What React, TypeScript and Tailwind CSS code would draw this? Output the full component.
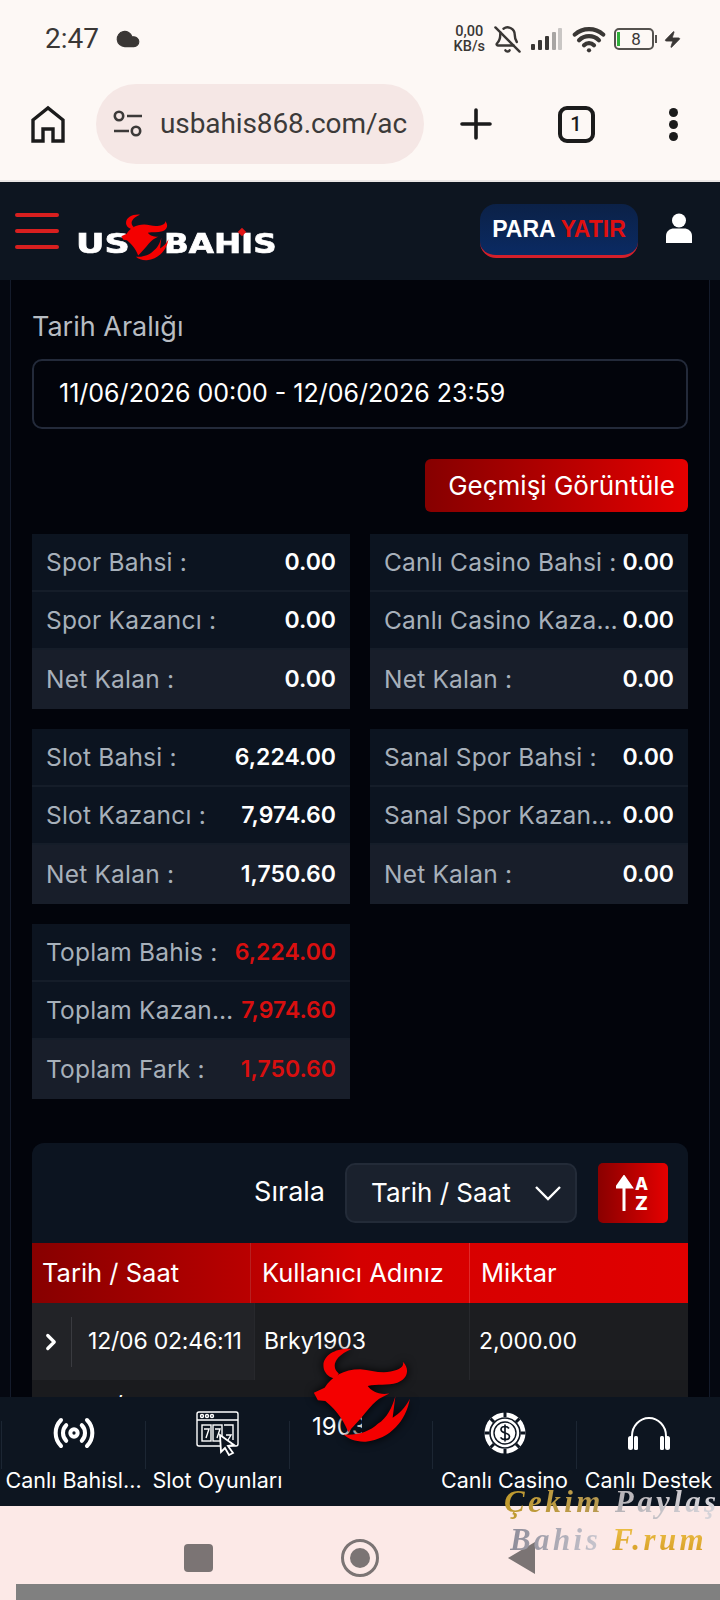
import { BellOff, ChevronRight, Cloud, Radio, Wifi, Zap } from "lucide-react";

function Bull({ className }: { className?: string }) {
  return (
    <svg viewBox="100 25 290 282" className={className}>
      <g fill="#f40000">
        <path d="M214 28 C165 24 122 50 132 88 C136 102 150 114 166 116 L176 101 C155 84 158 52 214 28Z" />
        <path d="M102 158 L134 143 C155 110 190 88 240 88 C270 90 300 102 330 95 C356 90 372 80 366 66 C386 85 384 116 350 128 C320 138 290 130 262 138 C272 152 296 166 326 160 L296 176 C272 192 245 235 204 274 C196 252 174 212 136 182 L114 180Z" />
        <path d="M387 176 C376 240 330 296 256 303 C226 304 206 296 190 282 C226 286 268 274 292 250 C320 232 334 202 344 168 L336 232 C356 220 374 202 387 176Z" />
      </g>
    </svg>
  );
}

function Stat({ label, value, tone, red, last }: { label: string; value: string; tone?: boolean; red?: boolean; last?: boolean }) {
  return (
    <div className={`flex items-center justify-between px-[14px] ${last ? "h-[59px]" : "h-[58px]"} ${tone ? "bg-[#181e2a]" : "bg-[#0c1420] border-b-2 border-[#151d29]"}`}>
      <span className="min-w-0 truncate text-[24.5px] tracking-[0.2px] text-[#a7b0ba]">{label}</span>
      <span className={`shrink-0 text-[23px] font-semibold ${red ? "text-[#d90f0f]" : "text-white"}`}>{value}</span>
    </div>
  );
}

function Group({ rows }: { rows: [string, string][] }) {
  return (
    <div>
      <Stat label={rows[0][0]} value={rows[0][1]} />
      <Stat label={rows[1][0]} value={rows[1][1]} />
      <Stat label={rows[2][0]} value={rows[2][1]} tone last />
    </div>
  );
}

function RedGroup() {
  return (
    <div>
      <Stat label="Toplam Bahis :" value="6,224.00" red />
      <Stat label="Toplam Kazancı :" value="7,974.60" red />
      <Stat label="Toplam Fark :" value="1,750.60" red tone last />
    </div>
  );
}

function NavItem({ label, children }: { label: string; children?: React.ReactNode }) {
  return (
    <div className="flex w-[144px] flex-col items-center">
      <div className="flex h-[60px] items-center justify-center text-white">{children}</div>
      <span className="mt-[3px] w-[136px] text-center text-[21.5px] leading-[28px] whitespace-nowrap text-white">{label}</span>
    </div>
  );
}

function Sep() {
  return (
    <div className="flex h-[84px] shrink-0 items-center">
      <div className="h-[48px] w-px bg-[#1c2633]" />
    </div>
  );
}

export default function App() {
  return (
    <div className="relative flex h-[1600px] w-[720px] flex-col overflow-hidden bg-[#02040b] font-['Inter',sans-serif]">
      {/* status bar */}
      <div className="flex h-[76px] shrink-0 items-center justify-between bg-[#fdf8f5] pl-[45px] pr-[38px] pt-[2px] font-['Roboto',sans-serif] text-[#3a3735]">
        <div className="flex items-center gap-[16px]">
          <span className="text-[28px] leading-none">2:47</span>
          <Cloud size={26} fill="#3a3735" strokeWidth={1} />
        </div>
        <div className="flex items-center gap-[8px]">
          <div className="flex flex-col items-center text-[14.5px] font-medium leading-[15px]">
            <span>0,00</span>
            <span>KB/s</span>
          </div>
          <BellOff size={29} strokeWidth={2} />
          <svg width="34" height="26" viewBox="0 0 34 26">
            <rect x="1" y="18" width="4" height="6" rx="1" fill="#3a3735" />
            <rect x="8" y="14" width="4" height="10" rx="1" fill="#3a3735" />
            <rect x="15" y="10" width="4" height="14" rx="1" fill="#3a3735" />
            <rect x="22" y="6" width="4" height="18" rx="1" fill="#a8a5a3" />
            <rect x="28" y="2" width="4" height="22" rx="1" fill="#c9c6c4" />
          </svg>
          <Wifi size={34} strokeWidth={3} />
          <div className="flex items-center">
            <div className="flex h-[22px] w-[40px] items-center rounded-[5px] border-2 border-[#55524f] pl-[1px] text-[17px] leading-none">
              <span className="h-[14px] w-[3px] bg-[#2fae3a]" />
              <span className="flex-1 text-center">8</span>
            </div>
            <span className="ml-[1px] h-[8px] w-[2px] bg-[#55524f]" />
          </div>
          <Zap size={19} fill="#3a3735" strokeWidth={1} className="-ml-[2px]" />
        </div>
      </div>

      {/* browser toolbar */}
      <div className="flex h-[106px] shrink-0 items-start border-b-2 border-[#e9e6e5] bg-[#fdf8f5] pt-[8px] font-['Roboto',sans-serif] text-[#1b1b1b]">
        <div className="flex h-[80px] w-[96px] shrink-0 items-center justify-center">
          <svg width="34" height="38" viewBox="0 0 34 38" fill="none" stroke="#1b1b1b" strokeWidth="3.4">
            <path d="M2 36 V15 L17 3 L32 15 V36 H22 V24 H12 V36Z" strokeLinejoin="miter" />
          </svg>
        </div>
        <div className="flex h-[80px] w-[328px] shrink-0 items-center overflow-hidden rounded-full bg-[#f5e7e5] pl-[17px] pr-[15px]">
          <svg width="30" height="30" viewBox="0 0 30 30" fill="none" stroke="#3c3a39" strokeWidth="2.6" className="shrink-0">
            <circle cx="6" cy="7" r="4.2" />
            <path d="M14 7 H29" />
            <circle cx="23" cy="22" r="4.2" />
            <path d="M1 22 H16" />
          </svg>
          <span className="ml-[17px] whitespace-nowrap text-[28px] tracking-[-0.1px] text-[#3c3a39]">usbahis868.com/ac</span>
        </div>
        <div className="flex h-[80px] w-[102px] shrink-0 items-center justify-center pl-[2px]">
          <svg width="32" height="32" viewBox="0 0 32 32" stroke="#1b1b1b" strokeWidth="3.6" strokeLinecap="round">
            <path d="M16 2 V30 M2 16 H30" />
          </svg>
        </div>
        <div className="flex h-[80px] w-[100px] shrink-0 items-center justify-center">
          <div className="flex h-[37px] w-[37px] items-center justify-center rounded-[9px] border-4 border-[#1b1b1b] text-[20px] font-medium leading-none">1</div>
        </div>
        <div className="flex h-[80px] w-[94px] shrink-0 flex-col items-center justify-center gap-[3px]">
          <span className="h-[9px] w-[9px] rounded-full bg-[#1b1b1b]" />
          <span className="h-[9px] w-[9px] rounded-full bg-[#1b1b1b]" />
          <span className="h-[9px] w-[9px] rounded-full bg-[#1b1b1b]" />
        </div>
      </div>

      {/* site header */}
      <div className="flex h-[98px] shrink-0 items-center bg-[#0d1520]">
        <div className="ml-[15px] flex w-[44px] flex-col gap-[12px]">
          <span className="h-[4px] rounded-full bg-[#d81f1f]" />
          <span className="h-[4px] rounded-full bg-[#d81f1f]" />
          <span className="h-[4px] rounded-full bg-[#d81f1f]" />
        </div>
        <div className="relative ml-[17px] flex h-[60px] w-[205px] items-end pb-[4px] font-['DejaVu_Sans',sans-serif] text-[26px] font-bold leading-[26px] text-white [-webkit-text-stroke:0.7px_white]">
          <span className="inline-block w-[88px] origin-left scale-x-[1.35]">US</span>
          <span className="inline-block origin-left scale-x-[1.25]">BAHIS</span>
          <Bull className="absolute bottom-[0px] left-[45px] h-[47px] w-[48px]" />
          <span className="absolute bottom-[26px] left-[163px] h-[6px] w-[6px] rotate-45 bg-[#e01515]" />
        </div>
        <div className="ml-[199px] flex h-[54px] w-[158px] items-center justify-center rounded-[16px] border-b-[3px] border-[#d41f2a] bg-gradient-to-b from-[#0b2147] to-[#0a2a63] font-['Liberation_Sans',sans-serif] text-[23px] font-bold">
          <span className="text-white">PARA</span>
          <span className="ml-[5px] text-[#e01010]">YATIR</span>
        </div>
        <svg width="26" height="30" viewBox="0 0 26 30" fill="#fff" className="ml-[28px] -mt-[6px]">
          <circle cx="13" cy="7.5" r="7" />
          <path d="M0 30 V23 C0 18 4 15.5 8 15.5 H18 C22 15.5 26 18 26 23 V30Z" />
        </svg>
      </div>

      {/* content */}
      <div className="relative min-h-0 flex-1 overflow-hidden bg-[#050811]">
        <div className="mx-[10px] h-full border-x border-[#141b2b] bg-[#02040b] px-[21px] pt-[29px]">
          <div className="text-[27px] leading-[36px] text-[#b7bcc2]">Tarih Aralığı</div>
          <div className="mt-[14px] flex h-[70px] items-center rounded-[10px] border-2 border-[#232a3a] pl-[25px] text-[25px] text-white">11/06/2026 00:00 - 12/06/2026 23:59</div>
          <div className="mt-[30px] flex justify-end">
            <button className="h-[53px] w-[263px] rounded-[6px] bg-gradient-to-r from-[#860000] to-[#e40000] pl-[10px] text-[26px] whitespace-nowrap text-white">Geçmişi Görüntüle</button>
          </div>
          <div className="mt-[22px] grid grid-cols-2 gap-x-[20px] gap-y-[20px]">
            <Group rows={[["Spor Bahsi :", "0.00"], ["Spor Kazancı :", "0.00"], ["Net Kalan :", "0.00"]]} />
            <Group rows={[["Canlı Casino Bahsi :", "0.00"], ["Canlı Casino Kazancı :", "0.00"], ["Net Kalan :", "0.00"]]} />
            <Group rows={[["Slot Bahsi :", "6,224.00"], ["Slot Kazancı :", "7,974.60"], ["Net Kalan :", "1,750.60"]]} />
            <Group rows={[["Sanal Spor Bahsi :", "0.00"], ["Sanal Spor Kazancı :", "0.00"], ["Net Kalan :", "0.00"]]} />
            <RedGroup />
          </div>

          <div className="mt-[44px] overflow-hidden rounded-t-[12px] bg-[#0c1420]">
            <div className="flex h-[100px] items-center justify-end pb-[1px] pr-[20px]">
              <span className="text-[27px] text-white">Sırala</span>
              <div className="ml-[20px] flex h-[60px] w-[232px] items-center justify-between rounded-[10px] border-2 border-[#232b38] bg-[#1a212d] pl-[24px] pr-[14px] text-[26px] whitespace-nowrap text-white">
                <span>Tarih / Saat</span>
                <svg width="26" height="16" viewBox="0 0 26 16" fill="none" stroke="#fff" strokeWidth="2.4">
                  <path d="M1 2 L13 14 L25 2" />
                </svg>
              </div>
              <div className="ml-[21px] flex h-[60px] w-[70px] items-center justify-center rounded-[5px] bg-gradient-to-r from-[#8a0000] to-[#e60000] text-white">
                <svg width="34" height="36" viewBox="0 0 34 36" fill="none" stroke="#fff" strokeWidth="3">
                  <path d="M8 36 V3" />
                  <path d="M1 12 L8 2 L15 12Z" fill="#fff" />
                  <text x="19" y="15" fill="#fff" stroke="none" fontSize="17" fontWeight="800">A</text>
                  <text x="19" y="35" fill="#fff" stroke="none" fontSize="19" fontWeight="800">Z</text>
                </svg>
              </div>
            </div>
            <div className="flex h-[60px] items-center bg-gradient-to-r from-[#870000] via-[#d40000] to-[#e00000] text-[25.5px] whitespace-nowrap text-white">
              <div className="flex h-full w-[219px] items-center border-r border-[#b82020] pl-[10px]">Tarih / Saat</div>
              <div className="flex h-full w-[219px] items-center border-r border-[#e12a2a] pl-[11px]">Kullanıcı Adınız</div>
              <div className="pl-[11px]">Miktar</div>
            </div>
            <div className="flex h-[77px] items-center bg-[#1c1d20] text-[23px] text-white">
              <div className="flex h-full w-[222px] shrink-0 items-center bg-[#222327]">
                <ChevronRight size={26} strokeWidth={3} className="ml-[6px]" />
                <span className="ml-[7px] h-[50px] w-px bg-[#3a3b40]" />
                <span className="ml-[16px] whitespace-nowrap tracking-[-0.2px]">12/06 02:46:11</span>
              </div>
              <div className="flex h-full w-[216px] shrink-0 items-center border-x border-[#27282c] pl-[9px]">Brky1903</div>
              <div className="pl-[9px]">2,000.00</div>
            </div>
            <div className="flex h-[40px] bg-[#1a1b1e] pl-[82px] pt-[13px] text-[24px] leading-none text-white">/</div>
          </div>
        </div>
      </div>

      {/* bottom nav */}
      <div className="relative flex h-[109px] shrink-0 items-start bg-[#0d1520] pl-[1px] pt-[6px]">
        <Sep />
        <NavItem label="Canlı Bahisl...">
          <Radio size={44} strokeWidth={2.2} />
        </NavItem>
        <Sep />
        <NavItem label="Slot Oyunları">
          <svg width="46" height="46" viewBox="0 0 46 46" fill="none" stroke="#fff" strokeWidth="1.4">
            <rect x="2" y="2" width="41" height="34" rx="2" />
            <path d="M2 10 H43" />
            <circle cx="7" cy="6" r="1.5" />
            <circle cx="12" cy="6" r="1.5" />
            <circle cx="17" cy="6" r="1.5" />
            <rect x="7" y="15" width="9" height="16" />
            <rect x="18" y="15" width="9" height="16" />
            <path d="M9 19 H14 L11 28 M20 19 H25 L22 28" />
            <path d="M29 15 H38 V30 M31 25 H36 L33 30" />
            <path d="M25 25 L39 35 L33 36 L38 43 L34 45 L30 38 L26 42Z" fill="#0d1520" strokeWidth="1.8" />
          </svg>
        </NavItem>
        <Sep />
        <div className="relative h-[84px] w-[142px] shrink-0">
          <span className="absolute left-[22px] top-[10px] h-[30px] w-[50px] overflow-hidden whitespace-nowrap text-[24px] leading-[28px] text-white">1903</span>
        </div>
        <Sep />
        <NavItem label="Canlı Casino">
          <svg width="42" height="42" viewBox="0 8 42 42">
            <circle cx="21" cy="29" r="20.5" fill="#fff" />
            <circle cx="21" cy="29" r="15" fill="none" stroke="#0d1520" strokeWidth="1.6" />
            <circle cx="21" cy="29" r="11" fill="none" stroke="#0d1520" strokeWidth="1.4" />
            <path d="M21 8 V13 M21 45 V50 M0.5 29 H5.5 M36.5 29 H41.5 M6.5 14.5 L10 18 M32 40 L35.5 43.5 M35.5 14.5 L32 18 M10 40 L6.5 43.5" stroke="#0d1520" strokeWidth="3" />
            <path d="M25 24.5 C24 23 22.5 22.5 21 22.5 C18.5 22.5 17 23.8 17 25.6 C17 30 25.5 28 25.5 32.5 C25.5 34.4 23.5 35.6 21 35.6 C19 35.6 17.4 34.8 16.5 33.4 M21 20.5 V37.5" fill="none" stroke="#0d1520" strokeWidth="1.7" />
          </svg>
        </NavItem>
        <Sep />
        <NavItem label="Canlı Destek">
          <svg width="42" height="34" viewBox="0 0 42 34" fill="none">
            <path d="M4 24 V20 A17 18 0 0 1 38 20 V24" stroke="#fff" strokeWidth="2" />
            <rect x="0" y="20" width="5" height="14" rx="2.5" fill="#fff" />
            <rect x="6" y="20" width="4" height="14" rx="1.5" fill="#fff" />
            <rect x="32" y="20" width="4" height="14" rx="1.5" fill="#fff" />
            <rect x="37" y="20" width="5" height="14" rx="2.5" fill="#fff" />
          </svg>
        </NavItem>
      </div>

      {/* android nav */}
      <div className="flex h-[94px] shrink-0 flex-col bg-[#fce9e7]">
        <div className="relative h-[78px]">
          <div className="ml-[184px] mt-[33px] flex items-center">
            <span className="h-[28px] w-[29px] rounded-[4px] bg-[#7b7474]" />
            <span className="ml-[128px] flex h-[38px] w-[38px] items-center justify-center rounded-full border-[3px] border-[#7b7474]">
              <span className="h-[20px] w-[20px] rounded-full bg-[#7b7474]" />
            </span>
            <svg width="27" height="32" viewBox="0 0 27 32" className="ml-[129px]">
              <path d="M0 16 L27 0 V32Z" fill="#7b7474" />
            </svg>
          </div>
        </div>
        <div className="ml-[16px] h-[16px] bg-[#808080]" />
      </div>

      {/* overlays */}
      <Bull className="absolute left-[313px] top-[1348px] h-[95px] w-[98px] drop-shadow-[0_0_5px_#000]" />
      <div className="absolute left-[504px] top-[1485px] font-['Liberation_Serif',serif] text-[31px] font-bold italic leading-[34px] tracking-[3.4px] whitespace-nowrap">
        <div>
          <span className="bg-gradient-to-r from-[#c09a2c] to-[#b79a55] bg-clip-text text-transparent">Çekim </span>
          <span className="bg-gradient-to-r from-[#b6b2b6] to-[#d8d6dc] bg-clip-text text-transparent">Paylaş</span>
        </div>
        <div className="ml-[6px] mt-[4px]">
          <span className="bg-gradient-to-r from-[#8e8c99] to-[#d0ced6] bg-clip-text text-transparent">Bahis </span>
          <span className="bg-gradient-to-b from-[#f0c54a] to-[#d49a20] bg-clip-text text-transparent">F.rum</span>
        </div>
      </div>
    </div>
  );
}
